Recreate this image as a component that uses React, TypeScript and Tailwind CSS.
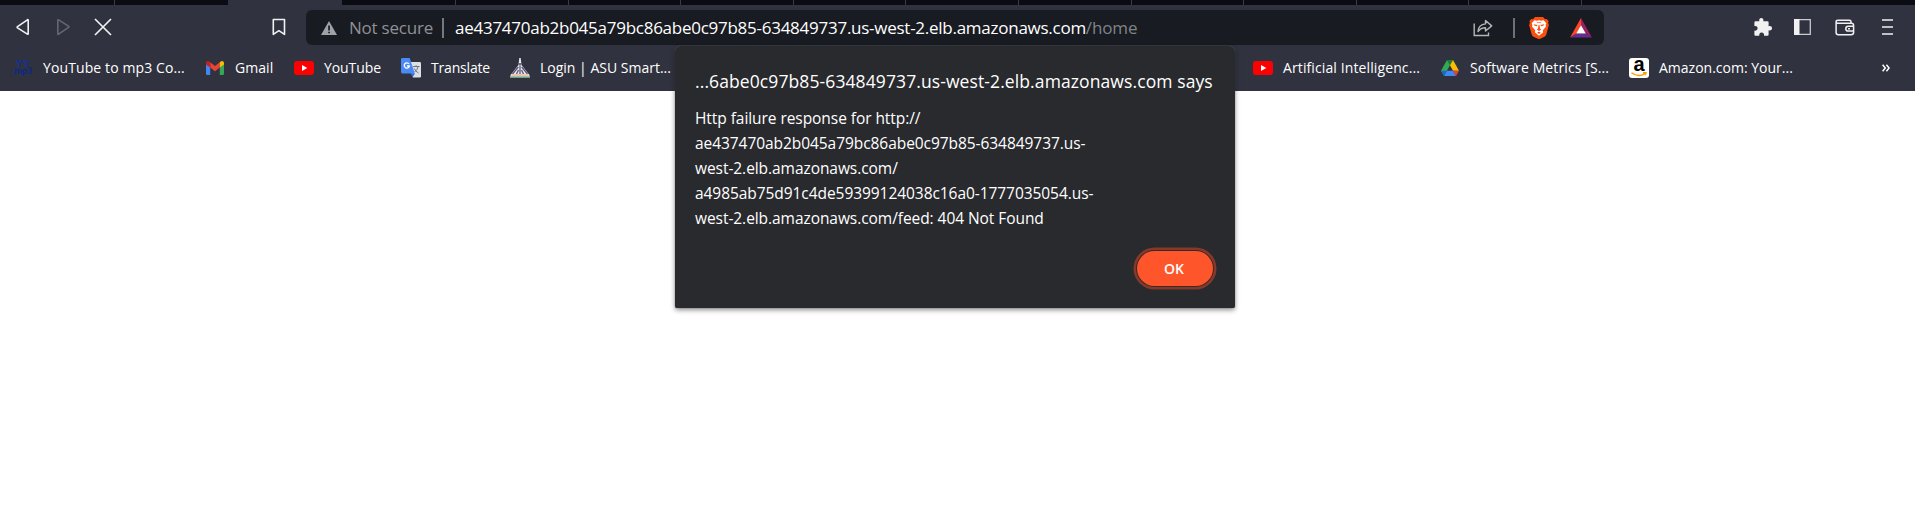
import type { ReactNode } from "react";

function TabStrip() {
  return (
    <div className="flex h-[5px] bg-[#0b0b14]">
      <div className="w-[114px] shrink-0" />
      <div className="w-[114px] shrink-0 border-l border-[#3c3c40]" />
      <div className="w-[114px] shrink-0 bg-[#30333f]" />
      <div className="w-[113px] shrink-0" />
      {Array.from({ length: 11 }, (_, i) => (
        <div key={i} className="w-[112.6px] shrink-0 border-l border-[#3c3c40]" />
      ))}
    </div>
  );
}

function Triangle({ className }: { className: string }) {
  return (
    <svg viewBox="0 0 14 18" className={"h-[18px] w-[14px] shrink-0 " + className} fill="none" stroke="currentColor" strokeWidth="1.6" strokeLinejoin="round">
      <path d="M12.2 2.2V15.8Q12.2 16.6 11.4 16.1L1.5 9.8Q.8 9.2 1.5 8.6L11.4 1.8Q12.2 1.3 12.2 2.2Z" />
    </svg>
  );
}

function BraveIcon() {
  return (
    <svg viewBox="0 0 20 22" className="h-[22px] w-5 shrink-0">
      <path fill="#fb4f10" d="M6 0h8l2.1 2.2 1.6-.3L19.6 4l-.5 1.8.8 2.2-2.6 9.4c-.3 1-1 1.8-1.8 2.3L10 22.3l-5.5-2.6c-.8-.5-1.5-1.3-1.8-2.3L.1 8l.8-2.2L.4 4l1.9-2.1 1.6.3Z" />
      <path fill="#fff" d="M5.3 3.2 8 3.7l2-.4 2 .4 2.7-.5L17.3 6.2 16.6 8l.4 1.6-3.3 3.9.5 1.7L10 18.7 5.8 15.2l.5-1.7L3 9.6 3.4 8 2.7 6.2Z" />
      <path fill="#fb4f10" d="M4.6 7.2 8.7 8 7.8 9.3 5.3 8.6ZM15.4 7.2 11.3 8l.9 1.3 2.5-.7ZM9.4 8.3h1.2l.4 3.4 1.2.8L10 13.9l-2.2-1.4 1.2-.8ZM7.2 4.8l2.8.6 2.8-.6-1.6 1.2H8.8ZM8.1 15.6 10 14.8l1.9.8L10 17Z" />
    </svg>
  );
}

function BatIcon() {
  return (
    <svg viewBox="0 0 22 20" className="h-5 w-[22px] shrink-0">
      <path fill="#ff4724" d="M11 0 0 19.5 6.5 15.5 11 7.5Z" />
      <path fill="#9e1f63" d="M11 0 22 19.5 15.7 15.5 11 7.5Z" />
      <path fill="#662d91" d="M0 19.5H22L15.7 15.5H6.5Z" />
      <path fill="#fff" d="M11 7.3 6.2 15.6H15.8Z" />
    </svg>
  );
}

function Toolbar() {
  return (
    <div className="flex h-[45px] items-center pl-4 pb-px text-[#f1f1f2]">
      <Triangle className="" />
      <Triangle className="ml-[26px] rotate-180 text-[#656770]" />
      <svg viewBox="0 0 18 18" className="ml-[24px] h-[18px] w-[18px] shrink-0" fill="none" stroke="currentColor" strokeWidth="1.7">
        <path d="M1 1 17 17M17 1 1 17" />
      </svg>
      <svg viewBox="0 0 14 18" className="ml-[160px] h-[18px] w-[14px] shrink-0" fill="none" stroke="currentColor" strokeWidth="1.6" strokeLinejoin="round">
        <path d="M1.3 1.5H12.5V16.4L6.9 12.7 1.3 16.4Z" />
      </svg>
      <div className="mt-px ml-5 flex h-[35px] w-[1298px] shrink-0 items-center rounded-md bg-[#181b21] font-['Open_Sans',sans-serif] text-[17px]">
        <svg viewBox="0 0 16 14" className="ml-[15px] h-[14px] w-4 shrink-0">
          <path fill="#a0a2a8" d="M8 0 16 14H0Z" />
          <path fill="#181b21" d="M7.2 4.5h1.7v5H7.2ZM7.2 10.7h1.7v1.6H7.2Z" />
        </svg>
        <span className="ml-3 w-[92px] shrink-0 whitespace-nowrap tracking-[-0.22px] text-[#8f9196]">Not secure</span>
        <div className="ml-[1px] h-5 w-0.5 bg-[#76787d]" />
        <span className="ml-[11px] whitespace-nowrap tracking-[-0.26px] text-white">
          ae437470ab2b045a79bc86abe0c97b85-634849737.us-west-2.elb.amazonaws.com
          <span className="tracking-[-0.14px] text-[#818388]">/home</span>
        </span>
        <svg viewBox="0 0 20 18" className="ml-auto h-[18px] w-5 shrink-0" fill="none" stroke="#b4b5b8" strokeWidth="1.4">
          <path d="M1.2 4.5V16.5H15.5V13.5" />
          <path d="M12.5 1.5 18.7 6.9 12.5 12V8.8C9 8.7 7.2 9.8 5 12.5 5.3 8.2 8 5.3 12.5 4.9Z" strokeLinejoin="round" />
        </svg>
        <div className="ml-[20px] mr-[14px] h-5 w-0.5 shrink-0 bg-[#6f7176]" />
        <BraveIcon />
        <div className="w-[21px] shrink-0" />
        <BatIcon />
        <div className="w-3 shrink-0" />
      </div>
      <svg viewBox="0 0 18 18" className="ml-[150px] h-[18px] w-[18px] shrink-0" fill="currentColor">
        <path d="M1.5 3.3H5.3C4.8 1.3 5.7 0 7.3 0S9.9 1.3 9.3 3.3H13.5Q14.6 3.3 14.6 4.4V8.2C16.7 7.7 18 8.6 18 10.2S16.7 12.8 14.6 12.2V16.5Q14.6 17.7 13.5 17.7H10C10.4 15.7 9.4 14.4 7.6 14.4S5 15.7 5.3 17.7H1.5Q.4 17.7 .4 16.5V12.8C2.3 13 3.6 12 3.6 10.3S2.3 7.8 .4 8.1V4.4Q.4 3.3 1.5 3.3Z" />
      </svg>
      <svg viewBox="0 0 17 16" className="ml-[22px] h-4 w-[17px] shrink-0">
        <path fill="none" stroke="#c9cacd" strokeWidth="1.3" d="M.7.7H16.3V15.3H.7Z" />
        <path fill="#f1f1f2" d="M0 0H5.5V16H0Z" />
      </svg>
      <svg viewBox="0 0 20 17" className="ml-6 h-[17px] w-5 shrink-0" fill="none" stroke="currentColor" strokeWidth="1.5">
        <path d="M1.1 3.2V13.5Q1.1 15.7 3.3 15.7H16Q18.6 15.7 18.6 13.5V6.5Q18.6 4.3 16.4 4.3H3Q1.1 4.3 1.1 2.7 1.1 1.2 3 1.2H14.5Q16 1.2 16 2.7V4" />
        <path d="M18.6 7.3H13.3Q10.8 7.3 10.8 9.7T13.3 12.1H18.6M13 9.7H15" />
      </svg>
      <svg viewBox="0 0 12 16" className="ml-[27px] h-4 w-3 shrink-0" stroke="currentColor" strokeWidth="1.7">
        <path d="M0 1H11M0 8H11M0 15H11" />
      </svg>
    </div>
  );
}

function YouTubeIcon() {
  return (
    <svg viewBox="0 0 20 14" className="h-[14px] w-5">
      <rect width="20" height="14" rx="3" fill="#f00" />
      <path fill="#fff" d="M8 4 13.3 7 8 10Z" />
    </svg>
  );
}

function Mp3Icon() {
  return (
    <div className="flex w-[17px] flex-col items-center font-['DejaVu_Sans',sans-serif] font-bold text-[#14309a]">
      <span className="text-[9px]/[8px] tracking-[1px]">YT</span>
      <span className="text-[8px]/[8px] tracking-[-0.5px] text-[#122880]">mp3</span>
    </div>
  );
}

function GmailIcon() {
  return (
    <svg viewBox="0 0 18 14" className="h-[14px] w-[18px]">
      <path fill="#4285f4" d="M0 3 4.2 5.5V14H1.3Q0 14 0 12.7Z" />
      <path fill="#34a853" d="M18 3 13.8 5.5V14h2.9Q18 14 18 12.7Z" />
      <path fill="#ea4335" d="M4.2 1.3 9 5l4.8-3.7v5.2L9 10.2 4.2 6.5Z" />
      <path fill="#c5221f" d="M0 2.3C0 .2 2.1-.6 3.5.7l.7.6v5.2L0 3.4Z" />
      <path fill="#fbbc04" d="M18 2.3C18 .2 15.9-.6 14.5.7l-.7.6v5.2L18 3.4Z" />
    </svg>
  );
}

function TranslateIcon() {
  return (
    <svg viewBox="0 0 20 20" className="h-5 w-5">
      <path fill="#dcdfe3" d="M8 4H18.7Q20 4 20 5.3V18.3Q20 19.5 18.7 19.5H12Z" />
      <path fill="#3367d6" d="M9.5 15.2H14L11.5 19.5Z" />
      <path fill="#4a8af4" d="M1.3 0H8.7L13.8 15.4H1.3Q0 15.4 0 14.1V1.3Q0 0 1.3 0Z" />
      <path fill="none" stroke="#fff" strokeWidth="1.3" d="M8 6A2.6 2.6 0 1 0 8.4 8H5.9" />
      <path fill="none" stroke="#6b7784" strokeWidth="1" d="M12 8.5H18.5M15.2 7.3V8.5M17.2 8.5Q16.3 12 13.5 14M13.3 10.5Q14.5 13.5 17.5 15" />
    </svg>
  );
}

function AsuIcon() {
  return (
    <svg viewBox="0 0 20 20" className="h-5 w-5">
      <path fill="#e8e8ee" d="M9.3 0h1.4L11.5 7 19 16.5H1L8.5 7Z" />
      <path fill="none" stroke="#5c5578" strokeWidth="1.3" d="M8.3 9 2.5 16M11.7 9 17.5 16M8.5 12 6.5 16M11.5 12 13.5 16M10 8V16" />
      <path fill="#6e688a" d="M8.8 5h2.4v2.5H8.8Z" />
      <path fill="#f4efe9" d="M1 16H19L20 19.5H0Z" />
      <path fill="#e88350" d="M1.5 16.6H18.5V17.4H1.5Z" />
      <path fill="#4fae72" d="M.4 18.4H19.6V19.3H.4Z" />
    </svg>
  );
}

function DriveIcon() {
  return (
    <svg viewBox="0 0 18 16" className="h-4 w-[18px]">
      <path fill="#188038" d="M6 0H12L9 5.3Z" />
      <path fill="#34a853" d="M6 0 9 5.3 3 15.8 0 10.7Z" />
      <path fill="#fbbc04" d="M12 0 18 10.7H12L9 5.3Z" />
      <path fill="#4285f4" d="M5.9 10.7H12.1L15 16H3Z" />
      <path fill="#1967d2" d="M0 10.7H5.9L3 16Z" />
      <path fill="#ea4335" d="M12.1 10.7H18L15 16Z" />
    </svg>
  );
}

function AmazonIcon() {
  return (
    <div className="flex h-5 w-5 flex-col items-center rounded-[3px] bg-white font-['Liberation_Sans',sans-serif] text-[20px] font-bold text-black">
      <span className="h-[14px] leading-[13px]">a</span>
      <svg viewBox="0 0 16 5" className="h-[5px] w-4" fill="none" stroke="#f90" strokeWidth="1.4">
        <path d="M.5.8Q7.5 6 14 1.5M12 .8 15 .8 14.3 3" />
      </svg>
    </div>
  );
}

function Bookmark({ icon, label, className, text }: { icon: ReactNode; label: string; className: string; text: string }) {
  return (
    <div className={"flex shrink-0 items-center " + className}>
      <div className="flex w-5 shrink-0 justify-center">{icon}</div>
      <span className={"ml-2.5 whitespace-nowrap pb-0.5 " + text}>{label}</span>
    </div>
  );
}

function BookmarksBar() {
  return (
    <div className="flex h-[41px] items-center pb-[5px] pl-[13px] font-['Open_Sans',sans-serif] text-[14px] text-white">
      <Bookmark icon={<Mp3Icon />} label="YouTube to mp3 Co..." className="w-[192px]" text="tracking-[0.11px]" />
      <Bookmark icon={<GmailIcon />} label="Gmail" className="w-[89px]" text="tracking-[0.05px]" />
      <Bookmark icon={<YouTubeIcon />} label="YouTube" className="w-[107px]" text="tracking-[-0.08px]" />
      <Bookmark icon={<TranslateIcon />} label="Translate" className="w-[109px]" text="tracking-[-0.18px]" />
      <Bookmark icon={<AsuIcon />} label="Login | ASU Smart..." className="w-[743px]" text="" />
      <Bookmark icon={<YouTubeIcon />} label="Artificial Intelligenc..." className="w-[187px]" text="tracking-[0.11px]" />
      <Bookmark icon={<DriveIcon />} label="Software Metrics [S..." className="w-[189px]" text="tracking-[0.11px]" />
      <Bookmark icon={<AmazonIcon />} label="Amazon.com: Your..." className="w-[253px]" text="" />
      <svg viewBox="0 0 8 8" className="h-2 w-2 shrink-0" fill="none" stroke="currentColor" strokeWidth="1.5">
        <path d="M.6.7 3.3 4 .6 7.3M4.4.7 7.1 4 4.4 7.3" />
      </svg>
    </div>
  );
}

function AlertDialog() {
  return (
    <div className="absolute left-[675px] top-[46px] flex h-[262px] w-[560px] flex-col rounded-t-md rounded-b-[2px] bg-[#292a2e] px-5 font-['Open_Sans',sans-serif] text-white shadow-[0_2px_5px_rgba(0,0,0,0.45),0_0_1px_#777]">
      <h1 className="mt-[22px] whitespace-nowrap text-[17.5px]/[26px] tracking-[0.1px]">
        ...6abe0c97b85-634849737.us-west-2.elb.amazonaws.com says
      </h1>
      <p className="mt-[12px] whitespace-nowrap text-[15.5px]/[25px] tracking-[-0.06px]">
        Http failure response for http://
        <br />
        ae437470ab2b045a79bc86abe0c97b85-634849737.us-
        <br />
        west-2.elb.amazonaws.com/
        <br />
        a4985ab75d91c4de59399124038c16a0-1777035054.us-
        <br />
        west-2.elb.amazonaws.com/feed: 404 Not Found
      </p>
      <button className="mr-[2px] mt-[20px] h-[35px] w-[76px] self-end rounded-full bg-[#ff552a] pr-0.5 text-sm font-semibold text-white shadow-[0_0_0_1px_#3b2927,0_0_0_3.5px_#84392a]">
        OK
      </button>
    </div>
  );
}

export default function App() {
  return (
    <div className="relative h-[520px] w-[1915px] overflow-hidden bg-white">
      <TabStrip />
      <header className="h-[86px] bg-[#30333f]">
        <Toolbar />
        <BookmarksBar />
      </header>
      <AlertDialog />
    </div>
  );
}
